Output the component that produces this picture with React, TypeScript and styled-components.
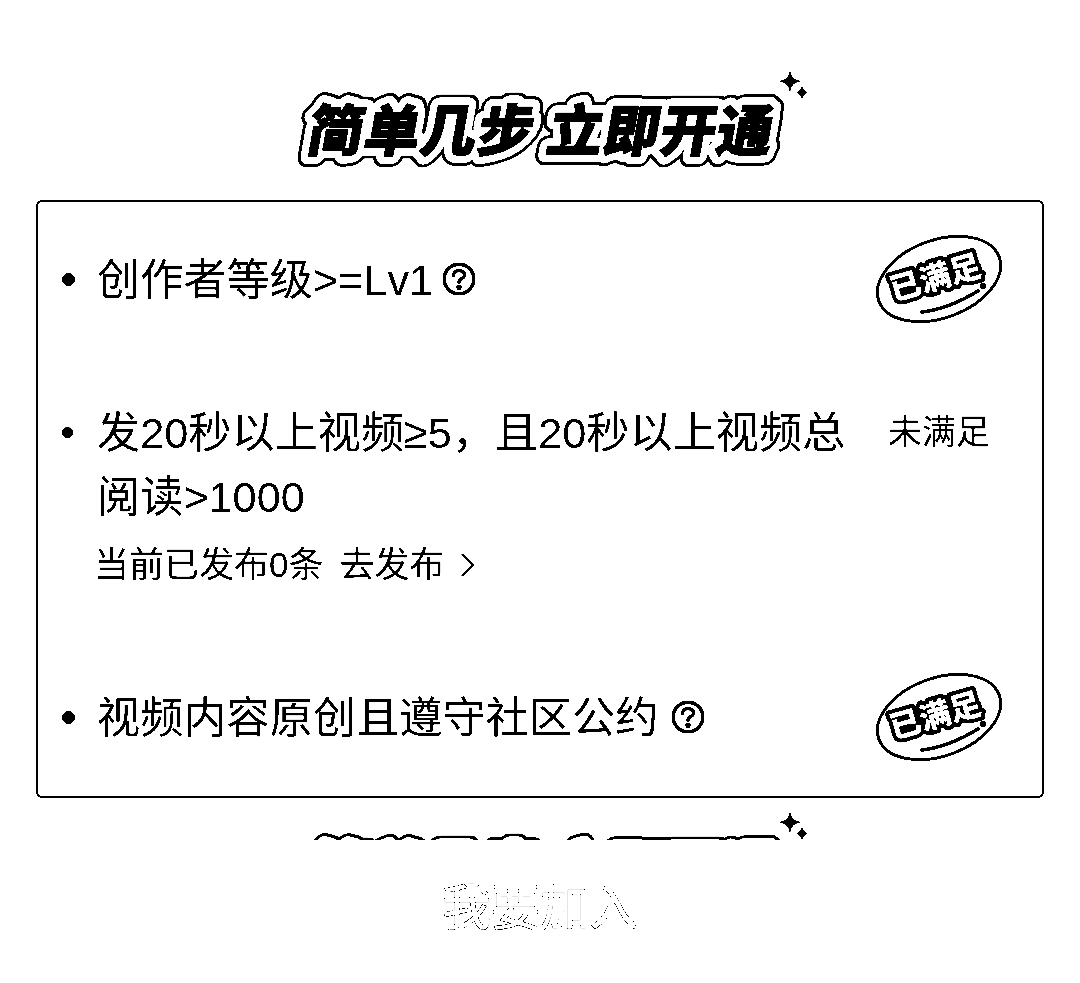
import styled, { createGlobalStyle } from 'styled-components'

const GlobalStyle = createGlobalStyle`
  html, body {
    margin: 0;
    background: #fff;
  }
  #root {
    filter: contrast(40);
  }
`

const Page = styled.div`
  width: 1080px;
  height: 983px;
  overflow: hidden;
  background: #fff;
  color: #000;
  font-family: "Liberation Sans", "Noto Sans CJK SC", sans-serif;
  display: flex;
  flex-direction: column;
  padding-top: 66px;
  box-sizing: border-box;
`

const HeadingClip = styled.div<{ $height: number; $top: number }>`
  height: ${p => p.$height}px;
  margin-top: ${p => p.$top}px;
  overflow: hidden;
  flex: none;
`

const HeadingArt = styled.svg`
  display: block;
  width: 1080px;
  height: 134px;
`

const Card = styled.section`
  flex: none;
  box-sizing: border-box;
  margin: 0 36px;
  height: 598px;
  border: 2px solid #000;
  border-radius: 6px;
  padding: 45px 38px 0 24px;
  display: flex;
  flex-direction: column;
  gap: 88px;
`

const Row = styled.div`
  display: flex;
  align-items: flex-start;
`

const Dot = styled.i<{ $size: number }>`
  flex: none;
  width: ${p => p.$size}px;
  height: ${p => p.$size}px;
  margin: ${p => 32 - p.$size / 2}px ${p => 35 - p.$size}px 0 0;
  border-radius: 50%;
  background: #000;
`

const Body = styled.div`
  flex: 1;
  min-width: 0;
  padding-top: 1px;
`

const Label = styled.div<{ $gap?: number }>`
  font-size: 43.2px;
  line-height: 64px;
  display: flex;
  align-items: center;
  gap: ${p => p.$gap ?? 13}px;
`

const Wrapped = styled(Label)`
  display: block;
`

const Sub = styled.div`
  font-size: 35px;
  line-height: 65px;
  margin: 3px 0 0 -3px;
  display: flex;
  align-items: center;
  gap: 16px;
`

const Status = styled.div`
  flex: none;
  width: 130px;
  height: 64px;
  display: flex;
  align-items: center;
  justify-content: center;
`

const StatusText = styled.span`
  font-size: 34px;
  line-height: 60px;
`

const Badge = styled.svg`
  flex: none;
  width: 130px;
  height: 90px;
`

const HelpMark = styled.svg`
  flex: none;
  width: 34px;
  height: 34px;
  margin-top: -2px;
`

const JoinButton = styled.div`
  flex: 1;
  background: #fff;
  text-align: center;
  padding-top: 39px;
  font-size: 49px;
  line-height: 58px;
  font-weight: 500;
  color: #fff;
  -webkit-text-stroke: 0.5px #000;
`

const Heading = ({ text }: { text: string }) => (
  <HeadingArt viewBox="0 0 1080 134">
    <g
      transform="translate(538 85) skewX(-10)"
      fontFamily='"Noto Sans CJK SC", sans-serif'
      fontSize="55.5"
      fontWeight="900"
      textAnchor="middle"
      strokeLinejoin="round"
      letterSpacing="1"
    >
      <text stroke="#000" strokeWidth="22" fill="#000">{text}</text>
      <text stroke="#fff" strokeWidth="16" fill="#fff">{text}</text>
      <text fill="#000" stroke="#000" strokeWidth="1.5">{text}</text>
    </g>
    <path d="M790 3 C791 11 793 14 802 15 C793 17 791 19 790 28 C789 19 787 17 778 15 C787 14 789 11 790 3Z" fill="#000" />
    <path d="M802 19 C803 23 804 25 808 26.500 C804 28 803 30 802 34 C801 30 800 28 796 26.500 C800 25 801 23 802 19Z" fill="#000" />
  </HeadingArt>
)

const MetBadge = () => (
  <Badge viewBox="0 0 130 90">
    <ellipse cx="65" cy="45" rx="64" ry="39" transform="rotate(-20 65 45)" fill="#fff" stroke="#000" strokeWidth="3" />
    <g transform="rotate(-16 63 43)">
      <text
        x="61"
        y="54"
        textAnchor="middle"
        fontFamily='"Noto Sans CJK SC", sans-serif'
        fontSize="31"
        fontWeight="900"
        fill="#fff"
        stroke="#000"
        strokeWidth="8"
        strokeLinejoin="round"
        paintOrder="stroke"
      >
        已满足
      </text>
    </g>
    <path d="M48 78 C66 76 86 68 104 57" fill="none" stroke="#000" strokeWidth="3.500" strokeLinecap="round" />
    <circle cx="109" cy="52" r="3" fill="#000" />
  </Badge>
)

const HelpIcon = () => (
  <HelpMark viewBox="0 0 34 34" fill="none" stroke="#000" strokeWidth="3.4" strokeLinecap="round">
    <circle cx="17" cy="17" r="14.8" />
    <path d="M11.5 13.5 C11.5 10 14 8.5 17 8.5 C20 8.5 22.5 10.5 22.5 13 C22.5 16.5 17 16.5 17 20.5" />
    <circle cx="17" cy="25.2" r="1" fill="#000" />
  </HelpMark>
)

const Chevron = () => (
  <svg width="16" height="26" viewBox="0 0 16 26" fill="none" stroke="#000" strokeWidth="2.4">
    <path d="M2 2 L13 13 L2 24" />
  </svg>
)

export default function App() {
  return (
    <Page>
      <GlobalStyle />
      <HeadingClip $height={134} $top={0}>
        <Heading text="简单几步 立即开通" />
      </HeadingClip>
      <Card>
        <Row>
          <Dot $size={13} />
          <Body>
            <Label $gap={9}>
              创作者等级&gt;=Lv1
              <HelpIcon />
            </Label>
          </Body>
          <Status>
            <MetBadge />
          </Status>
        </Row>
        <Row>
          <Dot $size={11} />
          <Body>
            <Wrapped>发20秒以上视频≥5，且20秒以上视频总阅读&gt;1000</Wrapped>
            <Sub>
              <span>当前已发布0条</span>
              <span>去发布</span>
              <Chevron />
            </Sub>
          </Body>
          <Status>
            <StatusText>未满足</StatusText>
          </Status>
        </Row>
        <Row>
          <Dot $size={13} />
          <Body>
            <Label>
              视频内容原创且遵守社区公约
              <HelpIcon />
            </Label>
          </Body>
          <Status>
            <MetBadge />
          </Status>
        </Row>
      </Card>
      <HeadingClip $height={33} $top={9}>
        <Heading text="简单几步 立即开通" />
      </HeadingClip>
      <JoinButton>我要加入</JoinButton>
    </Page>
  )
}
